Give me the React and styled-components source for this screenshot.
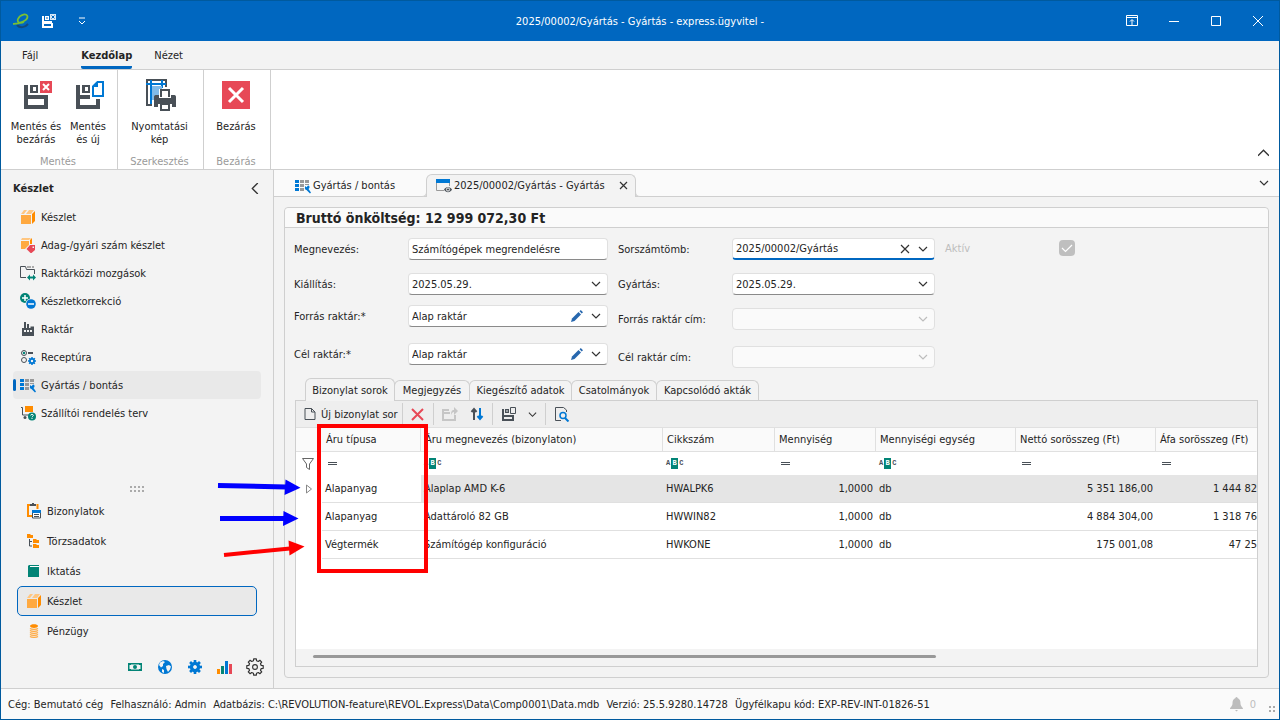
import React from "react";
import styled, { createGlobalStyle, css } from "styled-components";

const c = {
  accent: "#0067c0",
  frame: "#005a9e",
  surface: "#f3f3f3",
  light: "#fafafa",
  line: "#cfcfcf",
  soft: "#e0e0e0",
  text: "#242424",
  muted: "#9a9a9a",
  dark: "#495057",
  blue: "#0078d4",
  orange: "#ff8c00",
  amber: "#ffa940",
  green: "#028476",
  red: "#e74856",
};

const Global = createGlobalStyle`
  *, *::before, *::after { box-sizing: border-box; }
  body { margin: 0; }
  body, button, input, select, table {
    font-family: "DejaVu Sans Condensed", "DejaVu Sans", sans-serif;
    font-size: 11px;
    line-height: 13px;
    color: ${c.text};
  }
  button { background: none; border: 0; padding: 0; margin: 0; cursor: pointer; }
  svg { display: block; flex: none; }
`;

/* ---------- window ---------- */
const Window = styled.div`
  min-height: 100vh;
  display: flex;
  flex-direction: column;
  border: 1px solid ${c.frame};
  background: ${c.surface};
`;
const TitleBar = styled.header`
  height: 40px;
  display: grid;
  grid-template-columns: 1fr auto 1fr;
  align-items: center;
  background: ${c.accent};
  color: #fff;
`;
const QuickAccess = styled.div`
  display: flex;
  align-items: center;
  gap: 12px;
  padding-left: 12px;
`;
const WindowButtons = styled.div`
  display: flex;
  justify-content: flex-end;
`;
const WindowButton = styled.button`
  width: 42px;
  height: 40px;
  display: grid;
  place-items: center;
`;
const QuickButton = styled.button`
  width: ${(p) => (p.$wide ? "26px" : "16px")};
  display: grid;
  place-items: center;
`;
const Title = styled.h1`
  margin: 0;
  font-size: 11px;
  font-weight: 400;
`;

/* ---------- ribbon ---------- */
const RibbonTabs = styled.nav`
  height: 29px;
  display: flex;
  padding: 0 8px;
  border-bottom: 1px solid ${c.line};
`;
const RibbonTab = styled.button`
  padding: 0 ${(p) => (p.$first ? 13 : 11)}px;
  margin-right: ${(p) => (p.$first ? 19 : 0)}px;
  font-weight: ${(p) => (p.$active ? 700 : 400)};
  display: flex;
  align-items: center;
`;
const TabLabel = styled.span`
  height: 28px;
  display: flex;
  align-items: center;
  border-top: 3px solid transparent;
  border-bottom: 3px solid ${(p) => (p.$active ? c.accent : "transparent")};
  border-radius: 2px;
`;
const Ribbon = styled.div`
  height: 100px;
  display: flex;
  background: #fff;
  border-bottom: 1px solid ${c.line};
`;
const RibbonGroup = styled.section`
  width: ${(p) => p.$width}px;
  display: flex;
  flex-direction: column;
  justify-content: space-between;
  border-right: 1px solid ${c.line};
`;
const GroupButtons = styled.div`
  display: flex;
  justify-content: center;
  padding: ${(p) => (p.$multi ? "9px 3px 0 9px" : "9px 2px 0 0")};
`;
const RibbonButton = styled.button`
  flex: 1;
  display: flex;
  flex-direction: column;
  align-items: center;
  gap: 9px;
`;
const GroupName = styled.div`
  color: ${c.muted};
  text-align: center;
  padding: 0 2px 1px 0;
`;
const RibbonEnd = styled.div`
  margin-left: auto;
  display: flex;
  align-items: flex-end;
  padding: 0 10px 11px 0;
`;

/* ---------- side navigation ---------- */
const Body = styled.div`
  flex: 1;
  display: flex;
`;
const Sidebar = styled.aside`
  width: 273px;
  flex: none;
  display: flex;
  flex-direction: column;
  border-right: 1px solid ${c.line};
`;
const SideHead = styled.div`
  height: 33px;
  padding: 3px 13px 0 12px;
  display: flex;
  align-items: center;
  justify-content: space-between;
`;
const SideTitle = styled.h2`
  margin: 0;
  font-size: 11px;
  font-weight: 700;
`;
const SideItem = styled.button`
  height: 28px;
  margin: 0 12px;
  display: flex;
  align-items: center;
  gap: 5px;
  border-radius: 4px;
  background: ${(p) => (p.$active ? "#e9e9e9" : "transparent")};
`;
const Marker = styled.span`
  width: 3px;
  height: 12px;
  margin-right: -1px;
  border-radius: 2px;
  background: ${(p) => (p.$active ? c.accent : "transparent")};
`;
const Grip = styled.div`
  margin: auto auto 0;
  padding-bottom: 3px;
`;
const Modules = styled.div`
  display: flex;
  flex-direction: column;
  padding: 0 16px;
`;
const ModuleItem = styled.button`
  height: 30px;
  display: flex;
  align-items: center;
  gap: 5px;
  padding-left: 8px;
  border: 1px solid ${(p) => (p.$active ? c.accent : "transparent")};
  border-radius: 5px;
  background: ${(p) => (p.$active ? "#e9e9e9" : "transparent")};
`;
const SideFoot = styled.div`
  height: 42px;
  padding-right: 3px;
  display: flex;
  justify-content: flex-end;
  align-items: center;
`;
const FootButton = styled.button`
  width: 30px;
  height: 30px;
  display: grid;
  place-items: center;
`;

/* ---------- document area ---------- */
const Main = styled.main`
  flex: 1;
  min-width: 0;
  display: flex;
  flex-direction: column;
`;
const DocTabs = styled.div`
  height: 27px;
  display: flex;
  align-items: flex-end;
  padding-left: 13px;
  background: ${c.light};
  border-bottom: 1px solid ${c.line};
`;
const flare = css`
  &::before,
  &::after {
    content: "";
    position: absolute;
    bottom: 0;
    width: 5px;
    height: 5px;
    border: solid ${c.line};
  }
  &::before {
    right: 100%;
    border-width: 0 1px 1px 0;
    border-bottom-right-radius: 5px;
    background: ${c.light};
  }
  &::after {
    left: 100%;
    border-width: 0 0 1px 1px;
    border-bottom-left-radius: 5px;
    background: ${c.light};
  }
`;
const DocTab = styled.div`
  position: relative;
  height: 23px;
  margin-bottom: -1px;
  display: flex;
  align-items: center;
  gap: 14px;
  padding: 0 7px 1px;
  border: 1px solid transparent;
  border-bottom: 0;
  width: ${(p) => (p.$active ? 210 : 139)}px;
  ${(p) =>
    p.$active &&
    css`
      padding-left: 9px;
      border-color: ${c.line};
      border-radius: 6px 6px 0 0;
      background: ${c.surface};
      ${flare}
    `}
`;
const DocTabName = styled.button`
  display: flex;
  align-items: center;
  gap: 2px;
  white-space: nowrap;
`;
const DocTabsEnd = styled.button`
  margin-left: auto;
  align-self: center;
  padding-right: 10px;
`;
const Card = styled.section`
  flex: 1;
  min-width: 0;
  margin: 10px;
  display: flex;
  flex-direction: column;
  border: 1px solid ${c.line};
  border-radius: 4px;
`;
const CardHead = styled.h2`
  margin: 0;
  height: 20px;
  padding-left: 11px;
  display: flex;
  align-items: center;
  font-size: 14px;
  line-height: 18px;
  background: ${c.light};
  border-bottom: 1px solid ${c.line};
  border-radius: 4px 4px 0 0;
`;

/* ---------- form ---------- */
const Form = styled.form`
  display: flex;
  gap: 10px;
  padding: 10px 9px;
`;
const FieldColumn = styled.div`
  display: flex;
  flex-direction: column;
`;
const Field = styled.div`
  height: ${(p) => p.$height}px;
  display: flex;
  align-items: flex-start;
`;
const Label = styled.label`
  width: 114px;
  line-height: ${(p) => (p.$off ? 22 : 24)}px;
  color: ${(p) => (p.$off ? "#bdbdbd" : c.text)};
`;
const Box = styled.div`
  width: ${(p) => p.$width}px;
  height: 22px;
  display: flex;
  align-items: center;
  gap: 6px;
  padding: 0 4px 0 3px;
  background: #fff;
  border: 1px solid ${c.soft};
  border-bottom-color: #8a8a8a;
  border-radius: 4px;
  ${(p) => p.$focus && `border-bottom: 2px solid ${c.accent};`}
  ${(p) => p.$off && `background: ${c.light}; border-bottom-color: ${c.soft};`}
`;
const bare = css`
  flex: 1;
  min-width: 0;
  height: 20px;
  padding: 0;
  border: 0;
  outline: 0;
  background: transparent;
`;
const TextInput = styled.input`
  ${bare}
`;
const Select = styled.select`
  ${bare}
  appearance: none;
`;
const CheckWrap = styled.div`
  display: grid;
  margin-top: 2px;
  & > * {
    grid-area: 1 / 1;
  }
`;
const CheckBox = styled.input`
  appearance: none;
  width: 16px;
  height: 16px;
  margin: 0;
  border-radius: 4px;
  background: #bfbfbf;
`;

/* ---------- rows grid ---------- */
const GridTabs = styled.div`
  height: 22px;
  display: flex;
  align-items: flex-end;
  padding-left: 20px;
`;
const GridTab = styled.button`
  position: relative;
  height: ${(p) => (p.$active ? 23 : 20)}px;
  width: ${(p) => p.$width}px;
  margin-bottom: ${(p) => (p.$active ? -1 : 0)}px;
  margin-left: ${(p) => (p.$active ? 0 : -1)}px;
  border: 1px solid ${c.line};
  border-bottom: 0;
  border-radius: 6px 6px 0 0;
  background: ${c.surface};
  white-space: nowrap;
  z-index: ${(p) => (p.$active ? 1 : 0)};
`;
const GridArea = styled.div`
  position: relative;
  flex: 1;
  min-width: 0;
  margin: 0 10px 10px;
  display: flex;
`;
const GridPanel = styled.div`
  flex: 1;
  min-width: 0;
  display: flex;
  flex-direction: column;
  border: 1px solid ${c.line};
  background: #fff;
`;
const Toolbar = styled.div`
  height: 27px;
  display: flex;
  align-items: center;
  background: #eeeeee;
  border-bottom: 1px solid ${c.soft};
`;
const ToolGroup = styled.div`
  height: 22px;
  width: ${(p) => p.$width}px;
  padding: 0 8px;
  display: flex;
  align-items: center;
  justify-content: space-between;
  border-right: 1px solid ${(p) => (p.$last ? "transparent" : c.line)};
`;
const ToolButton = styled.button`
  display: flex;
  align-items: center;
  gap: 5px;
  white-space: nowrap;
`;
const TableView = styled.div`
  flex: 1;
  overflow: hidden;
`;
const Table = styled.table`
  width: 100%;
  table-layout: fixed;
  border-collapse: separate;
  border-spacing: 0;
`;
const HeadCell = styled.th`
  height: 24px;
  padding: 0 4px;
  font-weight: 400;
  text-align: left;
  white-space: nowrap;
  background: ${c.light};
  border-right: 1px solid ${(p) => (p.$plain ? "transparent" : c.soft)};
  border-bottom: 1px solid ${c.soft};
`;
const FilterCell = styled.td`
  height: 23px;
  padding: 0 3px 0 ${(p) => (p.$eq ? 6 : 3)}px;
`;
const Cell = styled.td`
  height: 28px;
  padding: 0 ${(p) => (p.$edge ? 0 : 3)}px 0 3px;
  text-align: ${(p) => (p.$num ? "right" : "left")};
  white-space: nowrap;
  background: ${(p) => (p.$selected ? "#e5e5e5" : "#fff")};
  border-bottom: 1px solid ${(p) => (p.$plain ? "transparent" : c.soft)};
`;
const Abc = styled.span`
  display: flex;
  align-items: center;
  gap: 1px;
  font-family: "Liberation Mono", monospace;
  font-size: 7px;
  line-height: 11px;
  font-weight: 700;
  color: ${c.dark};
`;
const AbcMid = styled.b`
  width: 7px;
  text-align: center;
  background: ${c.green};
  color: #fff;
`;
const ScrollTrack = styled.div`
  height: 17px;
  padding: 6px 0 0 17px;
  background: ${c.surface};
`;
const ScrollThumb = styled.div`
  width: 66%;
  height: 3px;
  border-radius: 2px;
  background: #999;
`;
const Marks = styled.svg`
  position: absolute;
  left: -80px;
  top: 0;
  pointer-events: none;
`;

/* ---------- status bar ---------- */
const StatusBar = styled.footer`
  height: 31px;
  display: flex;
  align-items: center;
  gap: 7px;
  padding: 0 3px 0 7px;
  background: ${c.light};
  border-top: 1px solid ${c.line};
`;
const StatusEnd = styled.div`
  margin-left: auto;
  display: flex;
  align-items: center;
  gap: 7px;
  color: #bdbdbd;
`;
const ResizeGrip = styled.span`
  padding: 10px 0 0 5px;
`;

/* ---------- icons ---------- */
const Svg = ({ s = 16, w = s, h = s, children }) => (
  <svg width={w} height={h} viewBox={`0 0 ${w} ${h}`} fill="none" aria-hidden="true">
    {children}
  </svg>
);
const Chevron = ({ dir = "down", size = 10, color = "#333" }) => {
  const d = {
    down: "M1 3l4 4 4-4",
    up: "M0 8l5-5 5 5",
    left: "M8 0L3 5l5 5",
  }[dir];
  return (
    <svg width={size} height={size} viewBox="0 0 10 10" fill="none" aria-hidden="true">
      <path d={d} stroke={color} strokeWidth="1.2" />
    </svg>
  );
};
const Cross = ({ s = 10, color = "#333", w = 1.2 }) => (
  <Svg s={s}>
    <path d={`M1 1L${s - 1} ${s - 1}M${s - 1} 1L1 ${s - 1}`} stroke={color} strokeWidth={w} />
  </Svg>
);
const Logo = () => (
  <Svg>
    <path d="M4 12c3 3.500 8 2.500 11-1" stroke="#134a7c" strokeWidth="2" />
    <path d="M0 10.800c6 .2 14.500-3 14.500-7C14.500-.2 7 1 5 6c-1.200 3.500 2 5 6 3" stroke="#7ac032" strokeWidth="1.800" />
  </Svg>
);
const QuickSave = () => (
  <Svg>
    <path d="M1 3h2v5h8V10h1v5H1zM3 11v2h7v-2z" fill="#fff" fillRule="evenodd" />
    <path d="M4 3h4v4H4zM5.500 4v2h1V4z" fill="#fff" fillRule="evenodd" />
    <path d="M9 1h6v6H9z" fill="#d7e8f7" />
    <path d="M10.500 2.500l3 3M13.500 2.500l-3 3" stroke="#0067c0" />
  </Svg>
);
const SaveClose = () => (
  <Svg s={32}>
    <path d="M4 6h4v10h20v14H4zM8 20v6h16v-6z" fill={c.dark} fillRule="evenodd" />
    <path d="M10 6h8v8h-8zM13 8v4h3V8z" fill={c.dark} fillRule="evenodd" />
    <path d="M20 2h12v12H20z" fill={c.red} />
    <path d="M23 5l6 6M29 5l-6 6" stroke="#fff" strokeWidth="2" />
  </Svg>
);
const SaveNew = () => (
  <Svg s={32}>
    <path d="M4 6h4v10h10v4H8v6h16v-6h4v10H4z" fill={c.dark} />
    <path d="M10 6h8v8h-8zM13 8v4h3V8z" fill={c.dark} fillRule="evenodd" />
    <path d="M25.500 3H31v14H21V7.500z" stroke={c.blue} strokeWidth="2" fill="#fff" />
    <path d="M21 8h5V3z" fill={c.blue} />
  </Svg>
);
const PrintPreview = () => (
  <Svg s={32}>
    <path d="M22 8V1H3v25h5" stroke={c.dark} strokeWidth="2" />
    <path d="M7 1v24M2 5h20M18 1v8" stroke={c.blue} strokeWidth="2" />
    <path d="M8 7h10v3h-3v6h-4v5H8z" fill="#80bbe9" />
    <path d="M17 18v-7h8v7" stroke={c.dark} strokeWidth="2" fill="#fff" />
    <path d="M10 18c0-1 .5-2 1.500-2H15v3h12v-3h3.500c1 0 1.500 1 1.500 2v10h-4v-3H14v3h-4z" fill={c.dark} />
    <path d="M17 25h8v6h-8z" stroke={c.dark} strokeWidth="2" fill="#fff" />
  </Svg>
);
const CloseBig = () => (
  <Svg s={32}>
    <path d="M2 2h28v28H2z" fill={c.red} />
    <path d="M9 9l14 14M23 9L9 23" stroke="#fff" strokeWidth="3" />
  </Svg>
);
const BoxIcon = () => (
  <Svg>
    <path d="M1 6h10v9H1z" fill={c.amber} />
    <path d="M12 5l3-3v10l-3 3z" fill={c.orange} />
    <path d="M1 5l3-4h3L4 5zM6 5l3-4h5l-3 4z" fill="#ffc680" />
  </Svg>
);
const BoxTag = () => (
  <Svg>
    <path d="M1 4h8v4l-4 4H1z" fill={c.amber} />
    <path d="M1 3l1-2h9L9 3z" fill="#ffc680" />
    <path d="M10 3l2-2v6h-2z" fill={c.orange} />
    <path d="M10 8h5v5l-4 3.500-4.500-4.500zM12.500 9.500v1.500H14V9.500z" fill={c.red} fillRule="evenodd" />
  </Svg>
);
const Transfer = () => (
  <Svg>
    <path d="M6 12.500H.5v-11h5l1 3h8V9" stroke={c.dark} />
    <path d="M7 1h4v2H7zM12 1h2v2h-2z" fill="#aaa" />
    <path d="M7 12.500l3-3v2h3v-2l3 3-3 3v-2h-3v2z" fill={c.green} />
  </Svg>
);
const PlusMinus = () => (
  <Svg>
    <circle cx="5" cy="5" r="5" fill={c.green} />
    <path d="M5 2v6M2 5h6" stroke="#fff" strokeWidth="1.500" />
    <circle cx="11" cy="11" r="5.500" fill={c.surface} />
    <circle cx="11" cy="11" r="4.800" fill={c.blue} />
    <path d="M8 11h6" stroke="#fff" strokeWidth="1.500" />
  </Svg>
);
const Factory = () => (
  <Svg>
    <path d="M2 15V7h2V1h2v6h1V3h2v4h1.500V5.500H14V15zM4 9v2h2V9zM7 9v2h2V9zM10 9v2h2V9z" fill={c.dark} fillRule="evenodd" />
  </Svg>
);
const Gear = ({ x = 8, y = 8, r = 6, hole = 2.2, color = c.blue }) => (
  <g transform={`translate(${x} ${y})`}>
    {[0, 45, 90, 135].map((a) => (
      <path key={a} transform={`rotate(${a})`} d={`M0 ${-r}V${r}`} stroke={color} strokeWidth={r * 0.38} />
    ))}
    <circle r={(r * 0.72 + hole) / 2} stroke={color} strokeWidth={r * 0.75 - hole} fill={c.surface} />
  </g>
);
const Recipe = () => (
  <Svg>
    <circle cx="4" cy="4" r="2.500" stroke={c.dark} />
    <circle cx="4" cy="4" r="1.200" fill={c.green} />
    <path d="M8 3h5v2H8z" fill={c.dark} />
    <circle cx="4" cy="11" r="2.500" stroke={c.dark} />
    <Gear x={12} y={12} r={4} hole={1.3} />
  </Svg>
);
const Production = () => (
  <Svg>
    <path d="M0 2h4v3H0zM0 6h4v3H0zM0 10h4v3H0z" fill={c.blue} />
    <path d="M5 2h4v3H5zM10 2h4v3h-4zM5 6h4v3H5zM5 10h4v3H5zM10 6h4v1h-4z" fill="#999" />
    <path d="M10 9.500V8l1.500 1.200L13 7.500c1.500 0 2 2 1.200 2.800L13.500 11l2.500 3.500-1 1-3.500-3.500c-1 0-2-1-1.500-2.500z" fill={c.blue} />
  </Svg>
);
const Cart = () => (
  <Svg>
    <path d="M1 2.500h1.500v7.500H9" stroke={c.dark} />
    <path d="M5 1h8v6H5z" fill={c.orange} />
    <circle cx="5" cy="12.500" r="1.500" fill={c.dark} />
    <circle cx="12" cy="11.500" r="4" fill={c.green} />
    <path d="M10.700 10.500c0-1.600 2.600-1.600 2.600 0 0 .8-1.300.8-1.300 1.800M12 13v1" stroke="#fff" />
  </Svg>
);
const Documents = () => (
  <Svg>
    <path d="M4 2H2v11h4M11.500 1v5" stroke={c.orange} strokeWidth="2" />
    <path d="M4 1h2V0h2v1h2v2H4z" fill={c.dark} />
    <path d="M6.500 8h8v7h-8z" stroke={c.dark} fill="#fff" />
    <path d="M6 7h9v3H6z" fill={c.blue} />
    <path d="M8 11.500h5M8 13.500h5" stroke={c.dark} />
  </Svg>
);
const Tree = () => (
  <Svg>
    <path d="M1 1h3l1 1h2v3H1zM7 6h3l1 1h2v3H7zM7 11h3l1 1h2v3H7z" fill={c.orange} />
    <path d="M3.500 6v7H6M3.500 8.500H6" stroke={c.dark} />
  </Svg>
);
const Book = () => (
  <Svg>
    <path d="M3 2h10v12H2V3z" fill={c.green} />
    <path d="M4 3.500h9" stroke="#fff" />
  </Svg>
);
const Coins = () => (
  <Svg>
    <path d="M4 3c0-2.500 8-2.500 8 0s-8 2.500-8 0z" fill={c.orange} />
    {[5.5, 7.5, 9.5, 11.5, 13.5].map((y) => (
      <path key={y} d={`M4 ${y}c1.500 1.200 6.500 1.200 8 0`} stroke={c.amber} strokeWidth="1.400" />
    ))}
  </Svg>
);
const Money = () => (
  <Svg>
    <path d="M1 4h14v8H1zM3 5.500L2.500 6v4l.5.5h10l.5-.5V6l-.5-.5z" fill={c.green} fillRule="evenodd" />
    <circle cx="8" cy="8" r="2" fill={c.green} />
    <path d="M2 5h2v1H2zM12 5h2v1h-2zM2 10h2v1H2zM12 10h2v1h-2z" fill={c.green} />
  </Svg>
);
const Globe = () => (
  <Svg>
    <circle cx="8" cy="8" r="7" fill={c.blue} />
    <path d="M3 3.500l3-1.500 2 1-2 2v2L4 8.500 2 6zM9 7l3-1 2 1.500-1 3-2 2.500-1.500-3zM5 10l2 1v3l-2-1z" fill={c.surface} />
  </Svg>
);
const GearBlue = () => (
  <Svg>
    <Gear r={7} hole={2} />
  </Svg>
);
const Chart = () => (
  <Svg>
    <path d="M0 10h3v5H0z" fill={c.orange} />
    <path d="M4 7h3v8H4z" fill={c.green} />
    <path d="M8 2h3v13H8z" fill={c.blue} />
    <path d="M12 5h3v10h-3z" fill={c.red} />
  </Svg>
);
const GearOutline = () => (
  <Svg s={18}>
    {(() => {
      const pts = [];
      for (let i = 0; i < 8; i += 1) {
        [
          [-14, 6.4],
          [-9, 8.3],
          [9, 8.3],
          [14, 6.4],
        ].forEach(([off, r]) => {
          const a = ((i * 45 + off) * Math.PI) / 180;
          pts.push(`${(9 + r * Math.sin(a)).toFixed(2)},${(9 - r * Math.cos(a)).toFixed(2)}`);
        });
      }
      return <polygon points={pts.join(" ")} stroke="#333" strokeWidth="1.200" strokeLinejoin="round" />;
    })()}
    <circle cx="9" cy="9" r="2.400" stroke="#333" strokeWidth="1.100" />
  </Svg>
);
const DocView = () => (
  <Svg>
    <path d="M.5 4v8.500H8" stroke="#999" />
    <path d="M13.500 4v4" stroke="#999" />
    <path d="M0 1h14v4H0z" fill={c.blue} />
    <path d="M8 11.500c2-3.500 6-3.500 8 0-2 3.500-6 3.500-8 0z" fill={c.dark} />
    <circle cx="12" cy="11.500" r="1.600" stroke={c.surface} />
  </Svg>
);
const Pencil = () => (
  <Svg s={12}>
    <path d="M0 12l1-3.500L7.500 2 10 4.500 3.500 11z" fill="#2767ae" />
    <path d="M8.500 1.300L9.800 0 12 2.200l-1.300 1.300z" fill="#2767ae" />
  </Svg>
);
const NewDoc = () => (
  <Svg s={12}>
    <path d="M1 .5h6.500L11 4v7.500H1zM7.500.5V4H11" stroke={c.dark} />
  </Svg>
);
const OpenShare = () => (
  <Svg>
    <path d="M7 4H1v10h12V9M1 7h7" stroke="#c6c6c6" strokeWidth="2" />
    <path d="M9 9c0-4 1-5 3-5V1l4 4-4 4V6c-1.500 0-2 1-3 3z" fill="#c6c6c6" />
  </Svg>
);
const SortArrows = () => (
  <Svg s={14}>
    <path d="M4 13V2M1.500 5L4 2l2.500 3" stroke={c.dark} strokeWidth="2" />
    <path d="M10 1v11M7.500 9l2.500 3 2.500-3" stroke={c.blue} strokeWidth="2" />
  </Svg>
);
const Layouts = () => (
  <Svg>
    <path d="M1 3h2v6h10v6H1zM3 11v2h8v-2z" fill={c.dark} fillRule="evenodd" />
    <path d="M4 3h4v4H4zM5.500 4v2h1V4z" fill={c.dark} fillRule="evenodd" />
    <path d="M9.500 1.500h5v6h-5z" stroke={c.dark} fill="#eee" />
  </Svg>
);
const Preview = () => (
  <Svg>
    <path d="M12.500 6V4L9.500 1.500h-8v13H7" stroke={c.dark} />
    <circle cx="9" cy="9.500" r="3" stroke={c.blue} strokeWidth="1.500" />
    <path d="M11 12l3.500 3.500" stroke={c.blue} strokeWidth="2" />
  </Svg>
);
const Funnel = () => (
  <Svg s={12}>
    <path d="M.5.5h11L7.500 6v5.500l-3-2V6z" stroke="#666" />
  </Svg>
);
const EqualSign = () => (
  <Svg w={9} h={5}>
    <path d="M0 1.500h9M0 3.500h9" stroke={c.dark} />
  </Svg>
);
const Bell = () => (
  <Svg w={13} h={15}>
    <path d="M6.500 0c1 0 1 1 1 1 2.500 1 3 3 3 5.500 0 3 2.500 3.500 2.500 5.500H0c0-2 2.500-2.500 2.500-5.500 0-2.500.5-4.500 3-5.500 0 0 0-1 1-1zM5 13h3l-1.500 1.500z" fill="#bdbdbd" />
  </Svg>
);
const GripDots = ({ cols = 4 }) => (
  <Svg w={cols * 4} h={8}>
    {Array.from({ length: cols * 2 }, (_, i) => (
      <path key={i} d={`M${(i % cols) * 4 + 1} ${Math.floor(i / cols) * 4 + 1}h2v2h-2z`} fill="#aaa" />
    ))}
  </Svg>
);

/* ---------- data ---------- */
const sideItems = [
  ["Készlet", BoxIcon],
  ["Adag-/gyári szám készlet", BoxTag],
  ["Raktárközi mozgások", Transfer],
  ["Készletkorrekció", PlusMinus],
  ["Raktár", Factory],
  ["Receptúra", Recipe],
  ["Gyártás / bontás", Production],
  ["Szállítói rendelés terv", Cart],
];
const modules = [
  ["Bizonylatok", Documents],
  ["Törzsadatok", Tree],
  ["Iktatás", Book],
  ["Készlet", BoxIcon],
  ["Pénzügy", Coins],
];
const gridTabs = [
  ["Bizonylat sorok", 90],
  ["Megjegyzés", 76],
  ["Kiegészítő adatok", 103],
  ["Csatolmányok", 86],
  ["Kapcsolódó akták", 103],
];
const columns = [
  { name: "Áru típusa", width: 99 },
  { name: "Áru megnevezés (bizonylaton)", width: 242, abc: true },
  { name: "Cikkszám", width: 112, abc: true },
  { name: "Mennyiség", width: 101, num: true },
  { name: "Mennyiségi egység", width: 140, abc: true },
  { name: "Nettó sorösszeg (Ft)", width: 140, num: true },
  { name: "Áfa sorösszeg (Ft)", num: true, edge: true },
];
const rows = [
  ["Alapanyag", "Alaplap AMD K-6", "HWALPK6", "1,0000", "db", "5 351 186,00", "1 444 82"],
  ["Alapanyag", "Adattároló 82 GB", "HWWIN82", "1,0000", "db", "4 884 304,00", "1 318 76"],
  ["Végtermék", "Számítógép konfiguráció", "HWKONE", "1,0000", "db", "175 001,08", "47 25"],
];
const status = [
  "Cég: Bemutató cég",
  "Felhasználó: Admin",
  "Adatbázis: C:\\REVOLUTION-feature\\REVOL.Express\\Data\\Comp0001\\Data.mdb",
  "Verzió: 25.5.9280.14728",
  "Ügyfélkapu kód: EXP-REV-INT-01826-51",
];

function Combo({ id, label, value, width = 200, height, edit, clear, focus, off }) {
  return (
    <Field $height={height}>
      <Label htmlFor={id}>{label}</Label>
      <Box $width={width} $focus={focus} $off={off}>
        <Select id={id} disabled={off}>
          <option>{value}</option>
        </Select>
        {edit && (
          <button type="button" aria-label="Szerkesztés">
            <Pencil />
          </button>
        )}
        {clear && (
          <button type="button" aria-label="Törlés">
            <Cross />
          </button>
        )}
        <Svg w={14} h={10}>
          <path d="M3 3l4 4 4-4" stroke={off ? "#bdbdbd" : "#333"} strokeWidth="1.200" />
        </Svg>
      </Box>
    </Field>
  );
}

function RowsGrid() {
  return (
    <Table>
      <colgroup>
        <col style={{ width: 26 }} />
        {columns.map((col) => (
          <col key={col.name} style={{ width: col.width }} />
        ))}
      </colgroup>
      <thead>
        <tr>
          <HeadCell $plain aria-label="Jelölő" />
          {columns.map((col) => (
            <HeadCell key={col.name} scope="col" $plain={col.edge}>
              {col.name}
            </HeadCell>
          ))}
        </tr>
      </thead>
      <tbody>
        <tr>
          <FilterCell $eq>
            <Funnel />
          </FilterCell>
          {columns.map((col) => (
            <FilterCell key={col.name} $eq={!col.abc}>
              {col.abc ? (
                <Abc>
                  A<AbcMid>B</AbcMid>C
                </Abc>
              ) : (
                <EqualSign />
              )}
            </FilterCell>
          ))}
        </tr>
        {rows.map((row, r) => (
          <tr key={row[1]}>
            <Cell $plain>
              {r === 0 && (
                <Svg w={18} h={10}>
                  <path d="M7.500 1l5 4-5 4z" stroke="#888" />
                </Svg>
              )}
            </Cell>
            {row.map((value, i) => (
              <Cell
                key={columns[i].name}
                $num={columns[i].num}
                $edge={columns[i].edge}
                $selected={r === 0 && i > 0}
              >
                {value}
              </Cell>
            ))}
          </tr>
        ))}
      </tbody>
    </Table>
  );
}

export default function App() {
  return (
    <Window>
      <Global />
      <TitleBar>
        <QuickAccess>
          <Logo />
          <QuickButton aria-label="Mentés és bezárás">
            <QuickSave />
          </QuickButton>
          <QuickButton $wide aria-label="Gyorselérési eszköztár">
            <Svg w={8} h={8}>
              <path d="M1 1h6M1 4l3 3 3-3" stroke="#fff" />
            </Svg>
          </QuickButton>
        </QuickAccess>
        <Title>2025/00002/Gyártás - Gyártás - express.ügyvitel -</Title>
        <WindowButtons>
          <WindowButton aria-label="Menüszalag">
            <Svg s={12}>
              <path d="M.5.5h11v10H.5zM.5 2.500h11M6 10V5M4 6.500L6 4.500l2 2" stroke="#fff" />
            </Svg>
          </WindowButton>
          <WindowButton aria-label="Kis méret">
            <Svg s={10}>
              <path d="M0 5.500h10" stroke="#fff" />
            </Svg>
          </WindowButton>
          <WindowButton aria-label="Teljes méret">
            <Svg s={10}>
              <path d="M.5.5h9v9h-9z" stroke="#fff" />
            </Svg>
          </WindowButton>
          <WindowButton aria-label="Bezárás">
            <Svg s={12}>
              <path d="M1 1l10 10M11 1L1 11" stroke="#fff" />
            </Svg>
          </WindowButton>
        </WindowButtons>
      </TitleBar>

      <RibbonTabs>
        <RibbonTab $first>
          <TabLabel>Fájl</TabLabel>
        </RibbonTab>
        <RibbonTab $active>
          <TabLabel $active>Kezdőlap</TabLabel>
        </RibbonTab>
        <RibbonTab>
          <TabLabel>Nézet</TabLabel>
        </RibbonTab>
      </RibbonTabs>
      <Ribbon>
        <RibbonGroup $width={117}>
          <GroupButtons $multi>
            <RibbonButton>
              <SaveClose />
              <span>Mentés és<br />bezárás</span>
            </RibbonButton>
            <RibbonButton>
              <SaveNew />
              <span>Mentés<br />és új</span>
            </RibbonButton>
          </GroupButtons>
          <GroupName>Mentés</GroupName>
        </RibbonGroup>
        <RibbonGroup $width={86}>
          <GroupButtons>
            <RibbonButton>
              <PrintPreview />
              <span>Nyomtatási<br />kép</span>
            </RibbonButton>
          </GroupButtons>
          <GroupName>Szerkesztés</GroupName>
        </RibbonGroup>
        <RibbonGroup $width={67}>
          <GroupButtons>
            <RibbonButton>
              <CloseBig />
              <span>Bezárás</span>
            </RibbonButton>
          </GroupButtons>
          <GroupName>Bezárás</GroupName>
        </RibbonGroup>
        <RibbonEnd>
          <button aria-label="Menüszalag összecsukása">
            <Chevron dir="up" size={11} />
          </button>
        </RibbonEnd>
      </Ribbon>

      <Body>
        <Sidebar>
          <SideHead>
            <SideTitle>Készlet</SideTitle>
            <button aria-label="Összecsukás">
              <Chevron dir="left" size={11} />
            </button>
          </SideHead>
          {sideItems.map(([name, Icon]) => {
            const active = name === "Gyártás / bontás";
            return (
              <SideItem key={name} $active={active}>
                <Marker $active={active} />
                <Icon />
                {name}
              </SideItem>
            );
          })}
          <Grip>
            <GripDots />
          </Grip>
          <Modules>
            {modules.map(([name, Icon]) => (
              <ModuleItem key={name} $active={name === "Készlet"}>
                <Icon />
                {name}
              </ModuleItem>
            ))}
          </Modules>
          <SideFoot>
            <FootButton aria-label="Pénztár"><Money /></FootButton>
            <FootButton aria-label="Web"><Globe /></FootButton>
            <FootButton aria-label="Beállítások"><GearBlue /></FootButton>
            <FootButton aria-label="Kimutatások"><Chart /></FootButton>
            <FootButton aria-label="Navigáció beállításai"><GearOutline /></FootButton>
          </SideFoot>
        </Sidebar>

        <Main>
          <DocTabs>
            <DocTab>
              <DocTabName>
                <Production />
                Gyártás / bontás
              </DocTabName>
            </DocTab>
            <DocTab $active>
              <DocTabName>
                <DocView />
                2025/00002/Gyártás - Gyártás
              </DocTabName>
              <button aria-label="Lap bezárása">
                <Cross s={9} />
              </button>
            </DocTab>
            <DocTabsEnd aria-label="Megnyitott lapok">
              <Chevron />
            </DocTabsEnd>
          </DocTabs>

          <Card>
            <CardHead>Bruttó önköltség: 12 999 072,30 Ft</CardHead>
            <Form>
              <FieldColumn>
                <Field $height={35}>
                  <Label htmlFor="name">Megnevezés:</Label>
                  <Box $width={200}>
                    <TextInput id="name" defaultValue="Számítógépek megrendelésre" />
                  </Box>
                </Field>
                <Combo id="issued" label="Kiállítás:" value="2025.05.29." height={32} />
                <Combo id="source" label="Forrás raktár:*" value="Alap raktár" height={38} edit />
                <Combo id="target" label="Cél raktár:*" value="Alap raktár" height={22} edit />
              </FieldColumn>
              <FieldColumn>
                <Combo id="series" label="Sorszámtömb:" value="2025/00002/Gyártás" width={203} height={35} clear focus />
                <Combo id="produced" label="Gyártás:" value="2025.05.29." width={203} height={35} />
                <Combo id="sourceAddress" label="Forrás raktár cím:" value="" width={203} height={38} off />
                <Combo id="targetAddress" label="Cél raktár cím:" value="" width={203} height={22} off />
              </FieldColumn>
              <FieldColumn>
                <Field $height={22}>
                  <Label htmlFor="active" $off>Aktív</Label>
                  <CheckWrap>
                    <CheckBox id="active" type="checkbox" defaultChecked disabled />
                    <Svg>
                      <path d="M3 8l3.500 3.500L13 5" stroke="#fff" strokeWidth="1.200" />
                    </Svg>
                  </CheckWrap>
                </Field>
              </FieldColumn>
            </Form>

            <GridTabs>
              {gridTabs.map(([name, width], i) => (
                <GridTab key={name} $active={i === 0} $width={width}>
                  {name}
                </GridTab>
              ))}
            </GridTabs>
            <GridArea>
              <GridPanel>
                <Toolbar>
                  <ToolGroup $width={107}>
                    <ToolButton>
                      <NewDoc />
                      Új bizonylat sor
                    </ToolButton>
                  </ToolGroup>
                  <ToolGroup $width={31}>
                    <ToolButton aria-label="Törlés"><Cross s={13} color={c.red} w={2} /></ToolButton>
                  </ToolGroup>
                  <ToolGroup $width={59}>
                    <ToolButton aria-label="Megnyitás"><OpenShare /></ToolButton>
                    <ToolButton aria-label="Sorrend"><SortArrows /></ToolButton>
                  </ToolGroup>
                  <ToolGroup $width={53}>
                    <ToolButton aria-label="Elrendezés"><Layouts /></ToolButton>
                    <ToolButton aria-label="Elrendezések"><Chevron size={9} /></ToolButton>
                  </ToolGroup>
                  <ToolGroup $width={33} $last>
                    <ToolButton aria-label="Előnézet"><Preview /></ToolButton>
                  </ToolGroup>
                </Toolbar>
                <TableView>
                  <RowsGrid />
                </TableView>
                <ScrollTrack>
                  <ScrollThumb />
                </ScrollTrack>
              </GridPanel>
              <Marks width="220" height="180" viewBox="215 400 220 180" fill="none" aria-hidden="true">
                <path d="M319 426h107v145H319z" stroke="#f00" strokeWidth="4" />
                <path d="M218 485.500l68 1.500M220 518.500h64" stroke="#00f" strokeWidth="5" />
                <path d="M285.500 479.500l15 8.200-16 7.300zM283.500 511l15 7.500-15.500 7.500z" fill="#00f" />
                <path d="M224 555l66-6.500" stroke="#f00" strokeWidth="4" />
                <path d="M288.500 540.500l16 6-15 9z" fill="#f00" />
              </Marks>
            </GridArea>
          </Card>
        </Main>
      </Body>

      <StatusBar>
        {status.map((text) => (
          <span key={text}>{text}</span>
        ))}
        <StatusEnd>
          <Bell />
          0
          <ResizeGrip>
            <GripDots cols={2} />
          </ResizeGrip>
        </StatusEnd>
      </StatusBar>
    </Window>
  );
}
